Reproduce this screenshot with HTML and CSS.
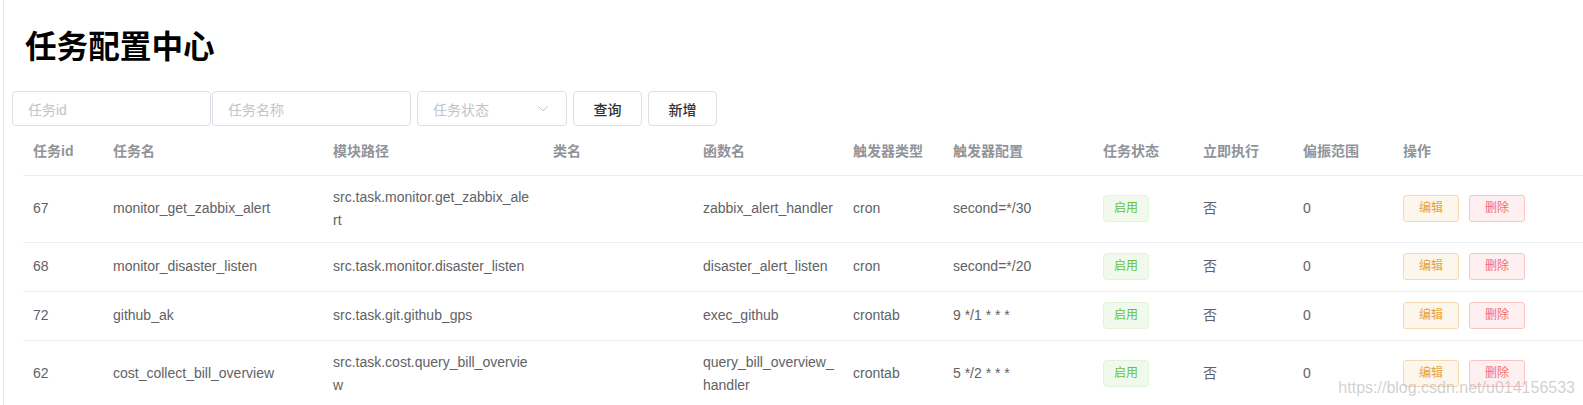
FILE: index.html
```html
<!DOCTYPE html>
<html lang="zh-CN">
<head>
<meta charset="utf-8">
<title>任务配置中心</title>
<link rel="stylesheet" href="styles.css">
</head>
<body>
<div class="page">
  <h1 class="title">任务配置中心</h1>
  <div class="filters">
    <div class="input w-id"><span class="ph">任务id</span></div>
    <div class="input w-name"><span class="ph">任务名称</span></div>
    <div class="input select"><span class="ph">任务状态</span>
      <svg class="arrow" width="10" height="6" viewBox="0 0 10 6"><polyline points="0.5,0.5 5,5 9.5,0.5" fill="none" stroke="#c0c4cc" stroke-width="1"/></svg>
    </div>
    <button class="btn">查询</button>
    <button class="btn">新增</button>
  </div>
  <table class="grid">
    <colgroup>
      <col style="width:80px"><col style="width:220px"><col style="width:220px"><col style="width:150px"><col style="width:150px"><col style="width:100px"><col style="width:150px"><col style="width:100px"><col style="width:100px"><col style="width:100px"><col>
    </colgroup>
    <thead>
      <tr><th>任务id</th><th>任务名</th><th>模块路径</th><th>类名</th><th>函数名</th><th>触发器类型</th><th>触发器配置</th><th>任务状态</th><th>立即执行</th><th>偏振范围</th><th>操作</th></tr>
    </thead>
    <tbody>
      <tr>
        <td>67</td><td>monitor_get_zabbix_alert</td><td class="brk">src.task.monitor.get_zabbix_alert</td><td></td><td>zabbix_alert_handler</td><td>cron</td><td>second=*/30</td>
        <td><span class="tag">启用</span></td><td>否</td><td>0</td>
        <td><span class="act edit">编辑</span><span class="act del">删除</span></td>
      </tr>
      <tr>
        <td>68</td><td>monitor_disaster_listen</td><td class="brk">src.task.monitor.disaster_listen</td><td></td><td>disaster_alert_listen</td><td>cron</td><td>second=*/20</td>
        <td><span class="tag">启用</span></td><td>否</td><td>0</td>
        <td><span class="act edit">编辑</span><span class="act del">删除</span></td>
      </tr>
      <tr>
        <td>72</td><td>github_ak</td><td class="brk">src.task.git.github_gps</td><td></td><td>exec_github</td><td>crontab</td><td>9 */1 * * *</td>
        <td><span class="tag">启用</span></td><td>否</td><td>0</td>
        <td><span class="act edit">编辑</span><span class="act del">删除</span></td>
      </tr>
      <tr>
        <td>62</td><td>cost_collect_bill_overview</td><td class="brk">src.task.cost.query_bill_overview</td><td></td><td>query_bill_overview_<wbr>handler</td><td>crontab</td><td>5 */2 * * *</td>
        <td><span class="tag">启用</span></td><td>否</td><td>0</td>
        <td><span class="act edit">编辑</span><span class="act del">删除</span></td>
      </tr>
    </tbody>
  </table>
  <div class="watermark">https://blog.csdn.net/u014156533</div>
</div>
</body>
</html>
```

FILE: styles.css
```css
* { box-sizing: border-box; }
html, body { margin: 0; padding: 0; background: #fff; }
body {
  font-family: "Liberation Sans", "Noto Sans CJK SC", sans-serif;
  font-size: 14px;
  color: #606266;
  overflow: hidden;
  height: 405px;
}
.page {
  position: relative;
  margin-left: 3px;
  border-left: 1px solid #e4e6ea;
  padding: 29px 0 0 8px;
  height: 405px;
}
.title {
  margin: 0 0 0 13px;
  font-family: "Noto Sans CJK SC", sans-serif;
  font-size: 31.6px;
  line-height: 31px;
  font-weight: 700;
  color: #000;
}
.filters {
  display: flex;
  align-items: center;
  margin-top: 31px;
  height: 35px;
}
.input {
  position: relative;
  display: flex;
  align-items: center;
  height: 35px;
  border: 1px solid #dcdfe6;
  border-radius: 4px;
  padding: 0 15px;
  background: #fff;
}
.w-id { width: 199px; margin-right: 1px; }
.w-name { width: 199px; margin-right: 6px; }
.select { width: 150px; margin-right: 6px; justify-content: space-between; padding-right: 18px; }
.ph { color: #c0c4cc; font-size: 14px; }
.arrow { display: block; }
.btn {
  height: 35px;
  width: 69px;
  margin-right: 6px;
  border: 1px solid #dcdfe6;
  border-radius: 4px;
  background: #fff;
  color: #303133;
  font-family: "Noto Sans CJK SC", sans-serif;
  font-size: 14px;
  font-weight: 500;
  padding: 0;
}
.grid {
  margin: 2px 0 0 11px;
  width: 1560px;
  table-layout: fixed;
  border-collapse: collapse;
}
.grid th, .grid td {
  text-align: left;
  padding: 0 10px;
  border-bottom: 1px solid #ebeef5;
  line-height: 23px;
  vertical-align: middle;
}
.grid th {
  color: #909399;
  font-weight: 700;
  height: 47px;
  padding-top: 12px;
  padding-bottom: 11px;
}
.grid td {
  padding-top: 10px;
  padding-bottom: 10px;
  height: 49px;
}
.brk { word-break: break-all; }
.tag {
  display: inline-block;
  height: 27px;
  line-height: 25px;
  padding: 0 10px;
  font-size: 12px;
  color: #67c23a;
  background: #f0f9eb;
  border: 1px solid #e1f3d8;
  border-radius: 4px;
  vertical-align: middle;
}
.act {
  display: inline-block;
  width: 56px;
  height: 27px;
  line-height: 25px;
  text-align: center;
  font-size: 12px;
  border-radius: 3px;
  vertical-align: middle;
}
.edit { color: #e6a23c; background: #fdf6ec; border: 1px solid #f5dab1; margin-right: 10px; }
.del { color: #f56c6c; background: #fef0f0; border: 1px solid #fbc4c4; }
.watermark {
  position: absolute;
  right: 8px;
  bottom: 8px;
  font-size: 16px;
  color: rgba(170, 170, 170, 0.55);
  pointer-events: none;
}
```
